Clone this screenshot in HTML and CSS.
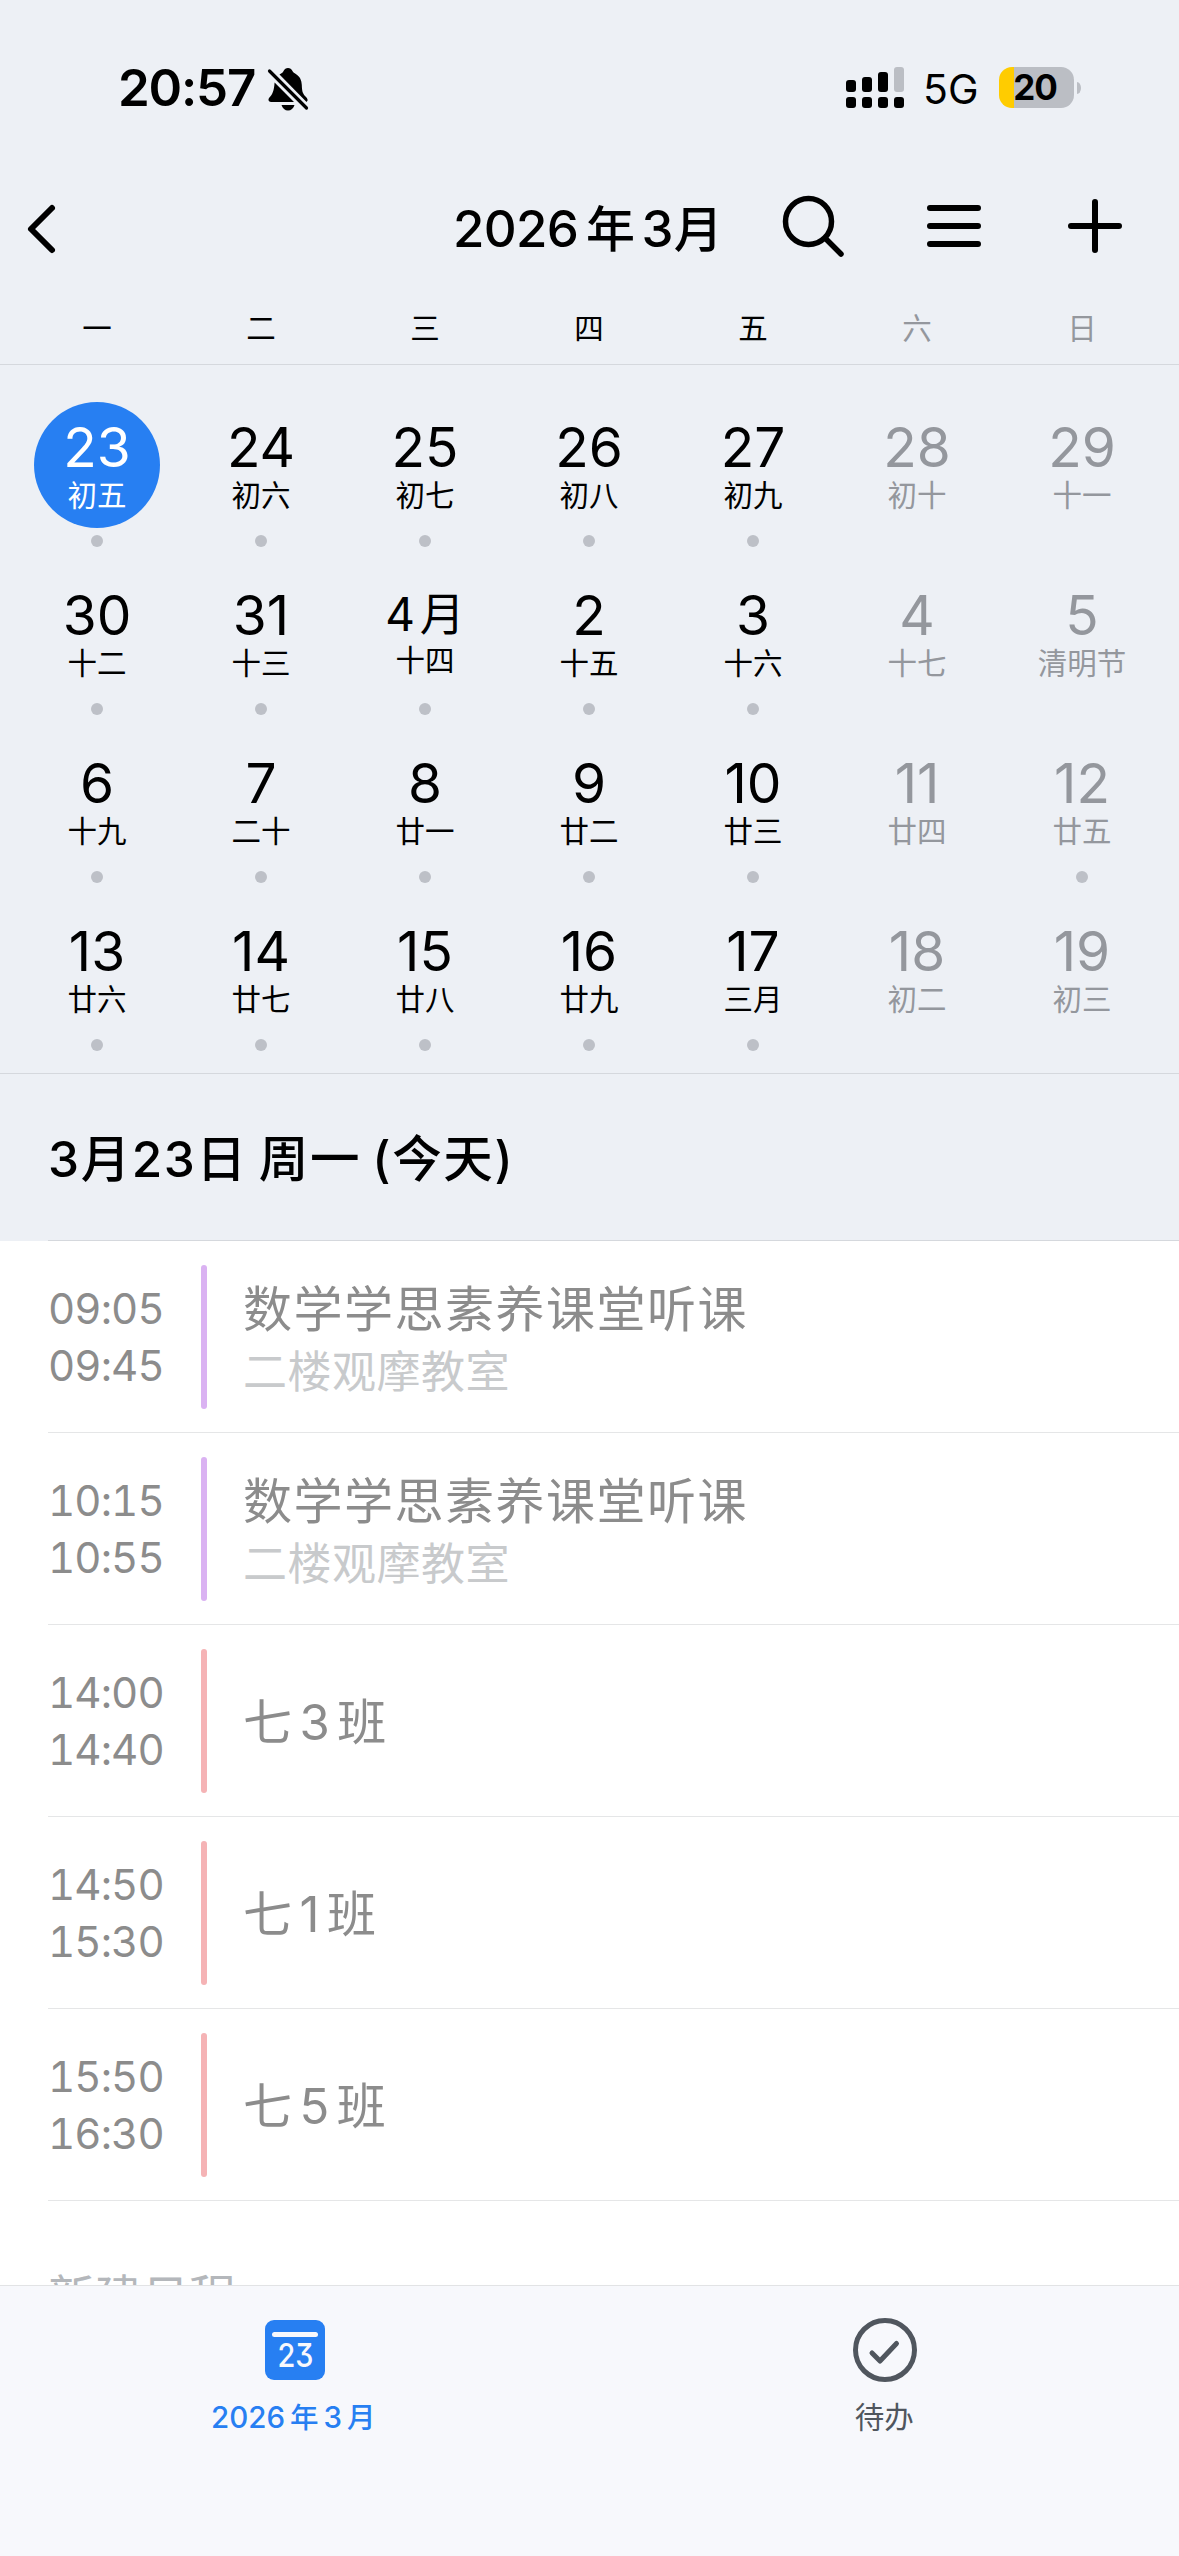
FILE: index.html
```html
<!DOCTYPE html>
<html lang="zh-CN">
<head>
<meta charset="utf-8">
<title>日历</title>
<link rel="stylesheet" href="styles.css">
</head>
<body>
<div class="app">
  <div class="status">
    <span class="clock">20:57</span>
    <svg class="bell" width="42" height="44" viewBox="0 0 42 44">
      <path d="M12.500 7.500C15 6 16 5.500 16.500 4C17.500 2 19 1 21 1s3.500 1 4.500 3C26 5.500 27.500 6 29.500 7.500C33 10 34.500 13 34.800 18C35 24 35.500 26 38 29C40 31 40.800 32 40.600 33.500L39.500 35Z"/>
      <path d="M7.600 15.500L27 35H4C1.500 35 .8 32.500 2.200 30.800C5.500 27.500 7 24 7.600 15.500Z"/>
      <path d="M14.500 38H27.500C26.500 41.500 24 43.500 21 43.500S15.500 41.500 14.500 38Z"/>
      <path d="M2 3.500L39.500 41" fill="none" stroke="#edf0f5" stroke-width="7"/>
      <path d="M2.500 4L39.500 41" fill="none" stroke="#000" stroke-width="3.200" stroke-linecap="round"/>
    </svg>
    <svg class="signal" width="58" height="42" viewBox="0 0 58 42">
      <rect x="0" y="13" width="10" height="12" rx="3"/>
      <rect x="16" y="10" width="10" height="15" rx="3"/>
      <rect x="32" y="5" width="10" height="20" rx="3"/>
      <rect x="48" y="0" width="10" height="25" rx="3" fill="#bbbec4"/>
      <rect x="0" y="30" width="10" height="11" rx="3"/>
      <rect x="16" y="30" width="10" height="11" rx="3"/>
      <rect x="32" y="30" width="10" height="11" rx="3"/>
      <rect x="48" y="30" width="10" height="11" rx="3"/>
    </svg>
    <span class="network">5G</span>
    <span class="battery">20</span>
    <span class="nub"></span>
  </div>

  <div class="nav">
    <svg class="back" width="32" height="52" viewBox="0 0 32 52"><path d="M27 5L6 26L27 47"/></svg>
    <div class="month">2026<span class="cjk">年</span>3<span class="cjk last">月</span></div>
    <svg class="search" width="64" height="64" viewBox="0 0 64 64"><circle cx="27.500" cy="27.500" r="23"/><path d="M44.500 44.500L60 60"/></svg>
    <svg class="menu" width="56" height="44" viewBox="0 0 56 44"><path d="M4 4H52M4 22H52M4 40H52"/></svg>
    <svg class="plus" width="56" height="56" viewBox="0 0 56 56"><path d="M28 4V52M4 28H52"/></svg>
  </div>

  <div class="weekdays">
    <span>一</span><span>二</span><span>三</span><span>四</span><span>五</span><span class="off">六</span><span class="off">日</span>
  </div>

  <div class="calendar">
    <div class="cell dot"><div class="disc today"><b>23</b><i>初五</i></div></div>
    <div class="cell dot"><div class="disc"><b>24</b><i>初六</i></div></div>
    <div class="cell dot"><div class="disc"><b>25</b><i>初七</i></div></div>
    <div class="cell dot"><div class="disc"><b>26</b><i>初八</i></div></div>
    <div class="cell dot"><div class="disc"><b>27</b><i>初九</i></div></div>
    <div class="cell off"><div class="disc"><b>28</b><i>初十</i></div></div>
    <div class="cell off"><div class="disc"><b>29</b><i>十一</i></div></div>

    <div class="cell dot"><div class="disc"><b>30</b><i>十二</i></div></div>
    <div class="cell dot"><div class="disc"><b>31</b><i>十三</i></div></div>
    <div class="cell dot"><div class="disc first"><b>4<span>月</span></b><i>十四</i></div></div>
    <div class="cell dot"><div class="disc"><b>2</b><i>十五</i></div></div>
    <div class="cell dot"><div class="disc"><b>3</b><i>十六</i></div></div>
    <div class="cell off"><div class="disc"><b>4</b><i>十七</i></div></div>
    <div class="cell off"><div class="disc"><b>5</b><i>清明节</i></div></div>

    <div class="cell dot"><div class="disc"><b>6</b><i>十九</i></div></div>
    <div class="cell dot"><div class="disc"><b>7</b><i>二十</i></div></div>
    <div class="cell dot"><div class="disc"><b>8</b><i>廿一</i></div></div>
    <div class="cell dot"><div class="disc"><b>9</b><i>廿二</i></div></div>
    <div class="cell dot"><div class="disc"><b>10</b><i>廿三</i></div></div>
    <div class="cell off"><div class="disc"><b>11</b><i>廿四</i></div></div>
    <div class="cell off dot"><div class="disc"><b>12</b><i>廿五</i></div></div>

    <div class="cell dot"><div class="disc"><b>13</b><i>廿六</i></div></div>
    <div class="cell dot"><div class="disc"><b>14</b><i>廿七</i></div></div>
    <div class="cell dot"><div class="disc"><b>15</b><i>廿八</i></div></div>
    <div class="cell dot"><div class="disc"><b>16</b><i>廿九</i></div></div>
    <div class="cell dot"><div class="disc"><b>17</b><i>三月</i></div></div>
    <div class="cell off"><div class="disc"><b>18</b><i>初二</i></div></div>
    <div class="cell off"><div class="disc"><b>19</b><i>初三</i></div></div>
  </div>

  <div class="date"><div class="date-text">3月23日 周一 (今天)</div></div>

  <div class="list">
    <div class="event"><div class="time">09:05<br>09:45</div><div class="bar purple"></div><div class="info"><div class="title">数学学思素养课堂听课</div><div class="place">二楼观摩教室</div></div></div>
    <div class="event"><div class="time">10:15<br>10:55</div><div class="bar purple"></div><div class="info"><div class="title">数学学思素养课堂听课</div><div class="place">二楼观摩教室</div></div></div>
    <div class="event"><div class="time">14:00<br>14:40</div><div class="bar red"></div><div class="info"><div class="title">七<span class="num">3</span>班</div></div></div>
    <div class="event"><div class="time">14:50<br>15:30</div><div class="bar red"></div><div class="info"><div class="title">七<span class="num">1</span>班</div></div></div>
    <div class="event"><div class="time">15:50<br>16:30</div><div class="bar red"></div><div class="info"><div class="title">七<span class="num">5</span>班</div></div></div>
    <div class="new">新建日程</div>
  </div>

  <div class="tabs">
    <div class="tab active">
      <svg width="64" height="64" viewBox="0 0 64 64">
        <rect x="2" y="2" width="60" height="60" rx="9" fill="#277ff2"/>
        <path d="M11.500 16.500H52.500" stroke="#f7f8fc" stroke-width="5" stroke-linecap="round"/>
        <text class="tab-day" x="14.500" y="48.500" textLength="36" lengthAdjust="spacingAndGlyphs">23</text>
      </svg>
      <div class="label">2026<span>年</span>3<span class="last">月</span></div>
    </div>
    <div class="tab todo">
      <svg width="64" height="64" viewBox="0 0 64 64" fill="none" stroke="#50565e" stroke-width="5" stroke-linecap="round" stroke-linejoin="round">
        <circle cx="32" cy="32" r="29.500"/><path d="M19 35L27 43L43.500 25.500"/>
      </svg>
      <div class="label">待办</div>
    </div>
  </div>
</div>
</body>
</html>
```
FILE: styles.css
```css
* { box-sizing: border-box; }
body {
  margin: 0;
  background: #edf0f5;
  color: #000;
  font-family: Inter, "Noto Sans CJK SC", sans-serif;
}
svg { display: block; flex: none; }
.app {
  width: 1179px;
  height: 2556px;
  display: flex;
  flex-direction: column;
  overflow: hidden;
}

/* status bar */
.status {
  height: 160px;
  padding: 67px 98px 0 118px;
  display: flex;
  align-items: flex-start;
}
.clock { width: 149px; font-size: 51px; font-weight: 600; line-height: 41px; letter-spacing: -1.200px; white-space: nowrap; }
.signal { margin-left: auto; }
.network { width: 95px; padding-left: 19px; font-size: 41px; line-height: 45px; }
.battery {
  width: 75px;
  height: 41px;
  padding-right: 3px;
  border-radius: 13px;
  background: linear-gradient(to right, #ffcc00 15px, #bbbec4 15px);
  font-size: 35px;
  font-weight: 700;
  line-height: 41px;
  text-align: center;
  letter-spacing: -1px;
}
.nub { width: 4px; height: 12px; margin: 15px 0 0 3px; border-radius: 0 4px 4px 0 / 0 6px 6px 0; background: #bbbec4; }

/* navigation */
.nav {
  height: 136px;
  padding: 0 56px 4px 25px;
  display: flex;
  align-items: center;
}
.nav svg { fill: none; stroke: #000; stroke-width: 6px; stroke-linecap: round; stroke-linejoin: round; }
.nav .back { margin-top: 6px; }
.nav .search { stroke-width: 5.500px; margin: 0 81px 0 auto; }
.nav .plus { margin-left: 85px; }
.month { margin: 6px 0 0 396px; font-size: 51px; font-weight: 500; line-height: 60px; letter-spacing: -0.700px; white-space: nowrap; }
.month .cjk { margin: 0 7px 0 8px; font-size: 49px; }
.month .last { margin: 0 0 0 1px; }

.weekdays {
  height: 69px;
  padding: 0 14px 5px 15px;
  border-bottom: 1px solid #d5d8dd;
  display: grid;
  grid-template-columns: repeat(6, 164px) 166px;
  text-align: center;
  font-size: 29.500px;
  line-height: 65px;
}
.off { color: #94979d; }

/* month grid */
.calendar {
  height: 709px;
  padding: 37px 14px 0 15px;
  border-bottom: 1px solid #d5d8dd;
  display: grid;
  grid-template-columns: repeat(6, 164px) 166px;
  grid-template-rows: 168px 168px 168px 167px;
}
.cell { display: flex; flex-direction: column; align-items: center; }
.disc {
  width: 126px;
  height: 126px;
  padding-top: 17px;
  border-radius: 50%;
  text-align: center;
  white-space: nowrap;
}
.disc b { display: block; font-size: 55px; font-weight: 400; line-height: 57px; }
.disc i { display: block; font-size: 29.500px; font-style: normal; line-height: 38px; }
.today { background: #277ff2; color: #fff; }
.first { padding-top: 17px; }
.first b { font-size: 46px; line-height: 54px; }
.first span { margin-left: 5px; font-size: 45px; }
.first i { line-height: 36px; }
.dot::after { content: ""; width: 12px; height: 12px; margin-top: 7px; border-radius: 50%; background: #bdc0c7; }

.date { height: 167px; padding-left: 48px; }
.date-text {
  height: 167px;
  border-bottom: 1px solid #d5d8dd;
  font-size: 49.500px;
  font-weight: 500;
  line-height: 170px;
  letter-spacing: 1.600px;
  word-spacing: -3.500px;
  white-space: nowrap;
}

/* agenda */
.list { flex: 1; min-height: 0; padding-left: 48px; overflow: hidden; background: #fff; color: #8c8c8c; }
.event { height: 192px; border-bottom: 1px solid #e5e6e7; display: flex; align-items: center; }
.time { width: 153px; font-size: 42px; line-height: 57px; letter-spacing: -0.900px; font-feature-settings: "tnum"; white-space: nowrap; }
.bar { width: 6px; height: 144px; border-radius: 3px; }
.purple { background: #dab2f2; }
.red { background: #f5b3b5; }
.info { margin-left: 36px; padding-top: 3px; }
.title { font-size: 49px; line-height: 69px; letter-spacing: 1.500px; }
.num { margin: 0 6px; }
.place { font-size: 44px; line-height: 57px; letter-spacing: 0.500px; color: #c8cacc; }
.new { font-size: 47px; line-height: 192px; color: #b4b7bb; }

/* tab bar */
.tabs { height: 271px; padding-top: 32px; border-top: 1px solid #e2e3e5; background: #f7f8fc; display: flex; }
.tab { flex: 1; display: flex; flex-direction: column; align-items: center; color: #50565e; }
.active { color: #277ff2; }
.todo svg { margin-left: 1px; }
.todo .label { font-weight: 400; }
.label { margin-top: 15px; font-size: 29.500px; font-weight: 500; line-height: 40px; white-space: nowrap; }
.active .label { padding-right: 3px; }
.label span { margin: 0 5px; font-size: 28.500px; }
.label .last { margin-right: 0; }
.tab-day { font-size: 33px; font-weight: 500; fill: #f7f8fc; font-feature-settings: "cv09"; }
```
